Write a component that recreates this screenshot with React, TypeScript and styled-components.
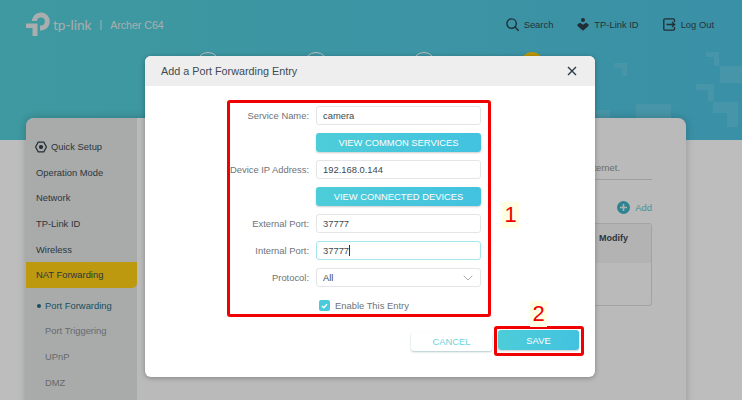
import styled, { createGlobalStyle } from "styled-components";

const GlobalStyle = createGlobalStyle`
  html, body {
    margin: 0;
    padding: 0;
    background: #fff;
    font-family: "Liberation Sans", Arial, sans-serif;
  }
  * { box-sizing: border-box; }
`;

const Page = styled.div`
  position: relative;
  width: 742px;
  height: 400px;
  overflow: hidden;
  background: #fff;
`;

const Header = styled.header`
  position: relative;
  height: 140px;
  background: linear-gradient(90deg, #54cfd8, #4fc3e1);
`;

const Pattern = styled.svg`
  position: absolute;
  top: 0;
  left: 0;
`;

const TopBar = styled.div`
  position: relative;
  display: flex;
  align-items: center;
  justify-content: space-between;
  height: 48px;
  padding: 0 28px 0 26px;
`;

const Brand = styled.div`
  display: flex;
  align-items: center;
  color: #e6eaea;
`;

const BrandName = styled.span`
  margin: 2px 0 0 2px;
  font-family: "Lato", "Liberation Sans", sans-serif;
  font-size: 13.6px;
`;

const BrandDivider = styled.span`
  margin: 1px 8px 0 8px;
  font-size: 10px;
`;

const Model = styled.span`
  margin-top: 2px;
  font-size: 10.6px;
`;

const TopLinks = styled.nav`
  display: flex;
  align-items: center;
  column-gap: 24px;
`;

const TopLink = styled.a`
  display: flex;
  align-items: center;
  column-gap: 5px;
  font-size: 9.4px;
  color: #33454f;
`;

const StepRow = styled.div`
  display: flex;
  column-gap: 84px;
  margin: 4px 0 0 196px;
`;

const Step = styled.span<{ $active?: boolean }>`
  width: 24px;
  height: 24px;
  border-radius: 50%;
  border: 1px solid #fff;
  background: ${(p) => (p.$active ? "#ffc90a" : "transparent")};
  border-color: ${(p) => (p.$active ? "#ffc90a" : "#fff")};
`;

const Card = styled.main`
  position: relative;
  display: flex;
  width: 660px;
  height: 300px;
  margin: -22px 0 0 26px;
  border-radius: 8px 8px 0 0;
  overflow: hidden;
  background: #fbfbfb;
  box-shadow: 0 0 8px rgba(0, 0, 0, 0.22);
`;

const Sidebar = styled.aside`
  display: flex;
  flex-direction: column;
  flex: 0 0 111px;
  padding-top: 16px;
  border-radius: 8px 0 8px 0;
  background: #e4e7e7;
`;

const MenuItem = styled.div<{ $active?: boolean }>`
  display: flex;
  align-items: center;
  column-gap: 4px;
  height: 25.6px;
  padding-left: 10px;
  font-size: 9.4px;
  color: #3d4a52;
  background: ${(p) => (p.$active ? "#ffcf16" : "transparent")};
  border-radius: ${(p) => (p.$active ? "0 0 5px 0" : "0")};
`;

const SubMenu = styled.div`
  padding-top: 5px;
`;

const SubItem = styled.div<{ $current?: boolean }>`
  position: relative;
  display: flex;
  align-items: center;
  height: 25.6px;
  padding-left: 19px;
  font-size: 9.4px;
  color: ${(p) => (p.$current ? "#1f6b7c" : "#8b9094")};

  &::before {
    content: "";
    display: ${(p) => (p.$current ? "block" : "none")};
    position: absolute;
    left: 11px;
    top: 11px;
    width: 4px;
    height: 4px;
    border-radius: 50%;
    background: #1f6b7c;
  }
`;

const Content = styled.section`
  display: flex;
  flex-direction: column;
  flex: 1;
  padding: 44px 34px 0 30px;
`;

const Description = styled.p`
  margin: 0;
  padding: 0 32px 6px 0;
  border-bottom: 1px solid #d5d5d5;
  text-align: right;
  font-size: 9.4px;
  color: #8d9296;
  height: 18px;
  line-height: 12px;
`;

const AddRow = styled.div`
  display: flex;
  justify-content: flex-end;
  align-items: center;
  column-gap: 5px;
  margin-top: 21px;
  font-size: 9.4px;
  color: #55c8d4;
`;

const Table = styled.div`
  width: 100%;
  height: 83px;
  margin-top: 9px;
  border: 1px solid #dcdcdc;
  border-radius: 3px;
`;

const TableHead = styled.div`
  display: flex;
  justify-content: flex-end;
  height: 39px;
  padding: 9px 23px 0 0;
  background: #f2f2f2;
  font-size: 9px;
  font-weight: bold;
  color: #3d4a52;
`;

const Backdrop = styled.div`
  position: absolute;
  inset: 0;
  background: rgba(0, 0, 0, 0.26);
`;

const Modal = styled.div`
  position: absolute;
  top: 56px;
  left: 145px;
  display: flex;
  flex-direction: column;
  width: 450px;
  height: 321px;
  border-radius: 6px;
  overflow: hidden;
  background: #fff;
  box-shadow: 0 1px 5px rgba(0, 0, 0, 0.3);
`;

const ModalHeader = styled.div`
  display: flex;
  align-items: center;
  justify-content: space-between;
  height: 30px;
  padding: 0 18px 0 16px;
  background: #eeeeee;
  font-size: 10.8px;
  color: #3f4b52;
`;

const ModalBody = styled.div`
  position: relative;
  flex: 1;
  padding: 14px 0 0 82px;
`;

const RedFrame = styled.div`
  border: 3px solid #f00000;
  border-radius: 3px;
`;

const Form = styled(RedFrame)`
  display: grid;
  grid-template-columns: 79px 165px;
  grid-auto-rows: 19px;
  align-content: start;
  align-items: center;
  column-gap: 7px;
  row-gap: 8px;
  width: 264px;
  height: 217px;
  padding: 3px 0 0 0;
`;

const Label = styled.label`
  text-align: right;
  font-size: 9.4px;
  color: #6d7378;
  white-space: nowrap;
`;

const Field = styled.div<{ $focused?: boolean }>`
  display: flex;
  align-items: center;
  justify-content: space-between;
  height: 19px;
  padding: 0 7px 0 6px;
  border: 1px solid ${(p) => (p.$focused ? "#a5e6ec" : "#e3e5e6")};
  border-radius: 3px;
  font-size: 9.4px;
  color: #42494e;
  background: #fff;
`;

const Value = styled.span`
  display: flex;
  align-items: center;
`;

const Caret = styled.span`
  width: 1px;
  height: 11px;
  background: #333;
`;

const Primary = styled.button`
  grid-column: 2;
  height: 19px;
  padding: 0;
  border: 0;
  border-radius: 3px;
  font-family: inherit;
  font-size: 9.4px;
  color: #fff;
  background: linear-gradient(90deg, #4dcdd8, #43c2e0);
  box-shadow: 0 1px 2px rgba(0, 0, 0, 0.2);
`;

const CheckRow = styled.div`
  grid-column: 2;
  display: flex;
  align-items: center;
  column-gap: 5px;
  margin: 2px 0 0 3px;
  font-size: 9.4px;
  color: #6d7378;
`;

const CheckBox = styled.span`
  display: flex;
  align-items: center;
  justify-content: center;
  width: 11px;
  height: 11px;
  border-radius: 2px;
  background: #4acbdc;
`;

const Footer = styled.div`
  display: flex;
  align-items: center;
  justify-content: flex-end;
  column-gap: 2px;
  margin-top: 9px;
  padding-right: 11px;
`;

const Cancel = styled.button`
  width: 81px;
  height: 19px;
  padding: 0;
  border: 0;
  border-radius: 3px;
  font-family: inherit;
  font-size: 9.4px;
  color: #6fd3dd;
  background: #fff;
  box-shadow: 0 1px 2px rgba(60, 120, 130, 0.4);
`;

const SaveFrame = styled(RedFrame)`
  display: flex;
  padding: 1px;
  width: 90px;
  height: 30px;
`;

const Save = styled(Primary)`
  width: 81px;
  height: 20px;
`;

const StepNumber = styled.span`
  position: absolute;
  display: flex;
  align-items: center;
  justify-content: center;
  width: 17px;
  height: 26px;
  font-size: 22px;
  color: #f00000;
  background: #ffffe3;
`;

const NumberOne = styled(StepNumber)`
  top: 116px;
  left: 357px;
`;

const NumberTwo = styled(StepNumber)`
  top: 215px;
  left: 385px;
`;

const SetupGlyph = styled.svg`
  margin: 0 0 0 -1px;
`;

function LogoMark() {
  return (
    <svg width="25" height="25" viewBox="0 0 25 25" fill="none">
      <path
        d="M8.5 9V8a6.5 6.5 0 1 1 6.5 8h-1"
        stroke="#e6eaea"
        strokeWidth="5"
      />
      <path d="M0 11.5h11.5V24H6.5V16H0z" fill="#e6eaea" />
    </svg>
  );
}

function SearchIcon() {
  return (
    <svg width="13" height="13" viewBox="0 0 13 13" fill="none" stroke="#2e3f4a" strokeWidth="1.4">
      <circle cx="5.6" cy="5.6" r="4.7" />
      <path d="M9 9l3.4 3.4" strokeLinecap="round" />
    </svg>
  );
}

function IdIcon() {
  return (
    <svg width="12" height="13" viewBox="0 0 12 13" fill="#2e3f4a">
      <circle cx="6" cy="2" r="2" />
      <path d="M0.5 6.2L3 4.8 6 6.8l3-2 2.5 1.4V8L6 12.8 0.5 8z" />
    </svg>
  );
}

function LogoutIcon() {
  return (
    <svg width="13" height="13" viewBox="0 0 13 13" fill="none" stroke="#2e3f4a" strokeWidth="1.3">
      <path d="M11.5 4V2a1.2 1.2 0 0 0-1.2-1.2H2A1.2 1.2 0 0 0 .8 2v9A1.2 1.2 0 0 0 2 12.2h8.3a1.2 1.2 0 0 0 1.2-1.2V9" />
      <path d="M3.5 6.5h8M9 4l2.6 2.5L9 9" />
    </svg>
  );
}

function QuickSetupIcon() {
  return (
    <SetupGlyph width="12" height="12" viewBox="0 0 12 12" fill="none" stroke="#34424b" strokeWidth="1.2">
      <path d="M3.2 1.2h5.6L11.4 6 8.8 10.8H3.2L.6 6z" />
      <circle cx="6" cy="6" r="1.5" fill="#34424b" />
    </SetupGlyph>
  );
}

function AddIcon() {
  return (
    <svg width="13" height="13" viewBox="0 0 13 13">
      <circle cx="6.5" cy="6.5" r="6.5" fill="#3fb4c4" />
      <path d="M6.5 3v7M3 6.5h7" stroke="#eee" strokeWidth="1.6" />
    </svg>
  );
}

function CloseIcon() {
  return (
    <svg width="10" height="10" viewBox="0 0 10 10" stroke="#2f3b43" strokeWidth="1.4">
      <path d="M1 1l8 8M9 1l-8 8" />
    </svg>
  );
}

function Chevron() {
  return (
    <svg width="10" height="6" viewBox="0 0 10 6" fill="none" stroke="#a9aeb1" strokeWidth="1">
      <path d="M.7.7L5 5l4.3-4.3" />
    </svg>
  );
}

function Check() {
  return (
    <svg width="7" height="6" viewBox="0 0 7 6" fill="none" stroke="#fff" strokeWidth="1.4">
      <path d="M1 3l1.8 1.8L6 1.2" />
    </svg>
  );
}

function App() {
  return (
    <Page>
      <GlobalStyle />
      <Header>
        <Pattern width="742" height="140" fill="#fff" fillOpacity="0.1">
          <path d="M614 63h13v13h-5v-8h-8z" />
          <path d="M706 52h13v14h-5v-9h-8z" />
          <rect x="720" y="66" width="22" height="17" />
          <path d="M696 84h18v17h-6v-11h-12z" />
          <path d="M713 102h25v25h-11v-14h-14z" />
          <rect x="636" y="104" width="35" height="14" />
          <rect x="590" y="110" width="20" height="8" />
        </Pattern>
        <TopBar>
          <Brand>
            <LogoMark />
            <BrandName>tp-link</BrandName>
            <BrandDivider>|</BrandDivider>
            <Model>Archer C64</Model>
          </Brand>
          <TopLinks>
            <TopLink><SearchIcon />Search</TopLink>
            <TopLink><IdIcon />TP-Link ID</TopLink>
            <TopLink><LogoutIcon />Log Out</TopLink>
          </TopLinks>
        </TopBar>
        <StepRow>
          <Step />
          <Step />
          <Step />
          <Step $active />
        </StepRow>
      </Header>

      <Card>
        <Sidebar>
          <MenuItem><QuickSetupIcon />Quick Setup</MenuItem>
          <MenuItem>Operation Mode</MenuItem>
          <MenuItem>Network</MenuItem>
          <MenuItem>TP-Link ID</MenuItem>
          <MenuItem>Wireless</MenuItem>
          <MenuItem $active>NAT Forwarding</MenuItem>
          <SubMenu>
            <SubItem $current>Port Forwarding</SubItem>
            <SubItem>Port Triggering</SubItem>
            <SubItem>UPnP</SubItem>
            <SubItem>DMZ</SubItem>
          </SubMenu>
        </Sidebar>
        <Content>
          <Description>Open ports to the Internet.</Description>
          <AddRow><AddIcon />Add</AddRow>
          <Table>
            <TableHead>Modify</TableHead>
          </Table>
        </Content>
      </Card>

      <Backdrop />

      <Modal>
        <ModalHeader>
          Add a Port Forwarding Entry
          <CloseIcon />
        </ModalHeader>
        <ModalBody>
          <Form>
            <Label>Service Name:</Label>
            <Field>camera</Field>
            <Primary>VIEW COMMON SERVICES</Primary>
            <Label>Device IP Address:</Label>
            <Field>192.168.0.144</Field>
            <Primary>VIEW CONNECTED DEVICES</Primary>
            <Label>External Port:</Label>
            <Field>37777</Field>
            <Label>Internal Port:</Label>
            <Field $focused><Value>37777<Caret /></Value></Field>
            <Label>Protocol:</Label>
            <Field>All<Chevron /></Field>
            <CheckRow>
              <CheckBox><Check /></CheckBox>
              Enable This Entry
            </CheckRow>
          </Form>
          <NumberOne>1</NumberOne>
          <NumberTwo>2</NumberTwo>
          <Footer>
            <Cancel>CANCEL</Cancel>
            <SaveFrame><Save>SAVE</Save></SaveFrame>
          </Footer>
        </ModalBody>
      </Modal>
    </Page>
  );
}

export default App;
